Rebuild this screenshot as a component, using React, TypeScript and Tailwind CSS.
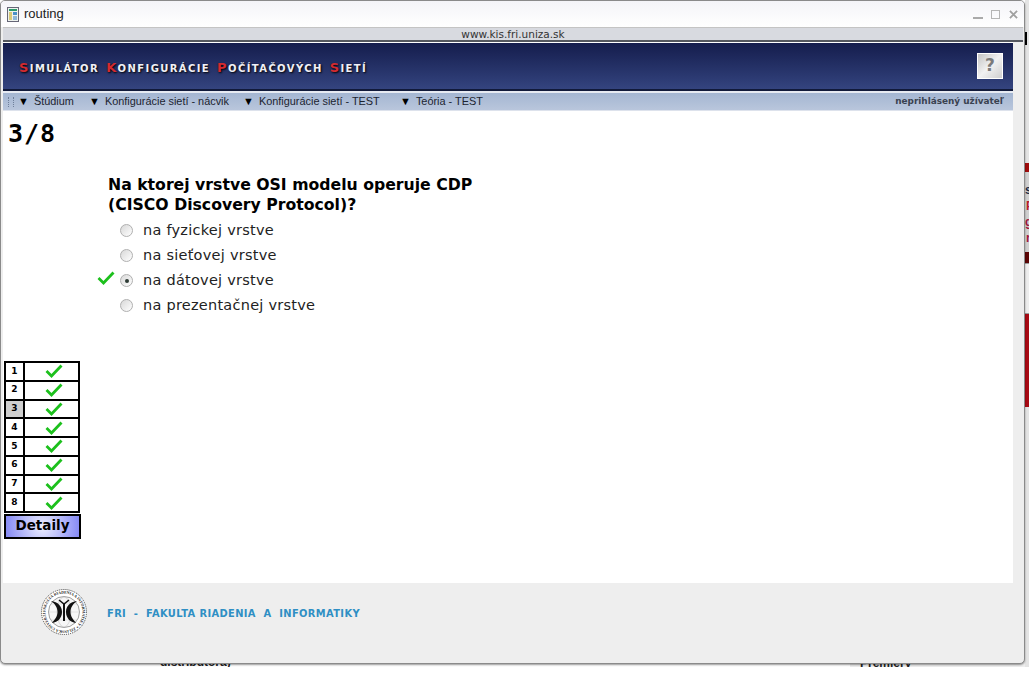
const answers = [
  { text: 'na fyzickej vrstve' },
  { text: 'na sieťovej vrstve' },
  { text: 'na dátovej vrstve', selected: true },
  { text: 'na prezentačnej vrstve' },
]

const menu = [
  { label: 'Štúdium', width: 'w-[71px]' },
  { label: 'Konfigurácie sietí - nácvik', width: 'w-[154px]' },
  { label: 'Konfigurácie sietí - TEST', width: 'w-[157px]' },
  { label: 'Teória - TEST', width: 'w-[100px]' },
]

const titleWords = ['IMULÁTOR', 'ONFIGURÁCIE', 'OČÍTAČOVÝCH', 'IETÍ']
const titleCaps = ['S', 'K', 'P', 'S']

function Check({ className }: { className: string }) {
  return (
    <svg viewBox="0 0 18 14" className={className} fill="none">
      <path d="M1.5 7 L6.5 12 L16.5 1.5" stroke="#1cc01c" strokeWidth="2.8" />
    </svg>
  )
}

function Radio({ selected }: { selected?: boolean }) {
  return (
    <span className="w-[13px] h-[13px] rounded-full border border-[#b0b0b0] bg-gradient-to-br from-[#d8d8d8] to-white flex items-center justify-center">
      {selected && <span className="w-[4px] h-[4px] rounded-full bg-[#2d3b35]" />}
    </span>
  )
}

function Logo() {
  return (
    <svg viewBox="0 0 46 46" className="w-[46px] h-[46px]">
      <circle cx="23" cy="23" r="22.5" fill="#fff" stroke="#444" strokeWidth="1" strokeDasharray="1 1" />
      <circle cx="23" cy="23" r="15.5" fill="#f6f6f6" stroke="#777" strokeWidth="0.7" />
      <ellipse cx="23" cy="23" rx="7" ry="15" fill="none" stroke="#bbb" strokeWidth="0.5" />
      <path d="M8 23 H38 M10 15 H36 M10 31 H36" stroke="#ccc" strokeWidth="0.5" />
      <defs>
        <path id="ring" d="M23 23 m-18.5 0 a18.5 18.5 0 1 1 37 0 a18.5 18.5 0 1 1 -37 0" />
      </defs>
      <text fontSize="3.9" fontFamily="'Liberation Serif', serif" fill="#222" fontWeight="700">
        <textPath href="#ring">FAKULTA RIADENIA A INFORMATIKY * ŽILINSKÁ UNIVERZITA</textPath>
      </text>
      <path d="M10 12 C17 13 21 17 21 23 C21 29 17 33 11 34 C14 30 16.5 27.5 16.5 23 C16.5 18.5 14 15 10 12 Z" fill="#111" />
      <path d="M36 12 C29 13 25 17 25 23 C25 29 29 33 35 34 C32 30 29.5 27.5 29.5 23 C29.5 18.5 32 15 36 12 Z" fill="#111" />
      <path d="M23 14 V32" stroke="#111" strokeWidth="2" />
      <path d="M18 11 L23 15 L28 11" stroke="#111" strokeWidth="1.6" fill="none" />
    </svg>
  )
}

export default function App() {
  return (
    <div className="relative w-[1032px] h-[674px] overflow-hidden bg-white font-['DejaVu_Sans',sans-serif]">
      {/* page behind the popup, the capture stops at 1029x667 */}
      <div className="absolute inset-0 w-[1029px] h-[667px] overflow-hidden">
        <div className="absolute left-[850px] top-[600px] w-[179px] h-[67px] bg-[#eeeeee]" />
        <div className="absolute left-[1025px] top-0 w-[4px] h-[667px] bg-[#e4e4e4]" />
        <div className="absolute left-[1025px] top-[32px] w-[2px] h-[13px] bg-black" />
        <div className="absolute left-[1025px] top-[163px] w-[4px] h-[244px] flex flex-col bg-[#d0d0d0]">
          <div className="h-[9px] shrink-0 bg-[#a00c0c]" />
          <div className="h-[80px] shrink-0 overflow-hidden font-['Liberation_Sans',sans-serif] font-bold text-[12px] leading-[16px]">
            <div className="mt-[10px] text-[#1c2a44]">s</div>
            <div className="text-[#b81c2c] pl-[1px]">P</div>
            <div className="text-[#a01840]">g</div>
            <div className="text-[#a01840] pl-[1px]">r</div>
          </div>
          <div className="h-[11px] shrink-0 bg-[#5c0505]" />
          <div className="h-[51px] shrink-0 bg-[#eeeeee] border-y border-[#999999]" />
          <div className="h-[93px] shrink-0 bg-[#a80a14]" />
        </div>
        <div className="absolute left-[160px] top-[653px] font-['Liberation_Sans',sans-serif] text-[12px] font-bold text-[#222]">distributora)</div>
        <div className="absolute left-[860px] top-[654px] font-['Liberation_Sans',sans-serif] text-[12px] font-bold text-[#222]">Premiéry</div>
      </div>

      {/* popup window */}
      <div className="relative w-[1025px] h-[664px] flex flex-col bg-[#eeeeee] border border-[#8a8a8a] rounded-[5px] overflow-hidden shadow-[0_1px_2px_rgba(0,0,0,0.4)] pl-[2px]">
        <div className="h-[26px] -ml-[2px] pl-[6px] pr-[6px] shrink-0 flex items-center bg-gradient-to-b from-[#f4f4f8] to-white font-['Liberation_Sans',sans-serif]">
          <svg viewBox="0 0 12 15" className="w-[12px] h-[15px]">
            <rect x="0.5" y="0.5" width="11" height="14" fill="#eef3ee" stroke="#667" />
            <rect x="2" y="2" width="8" height="2" fill="#2a9a6a" />
            <rect x="2" y="5" width="3" height="8" fill="#d9c97a" />
            <rect x="6" y="5" width="4" height="3" fill="#4a90c8" />
            <rect x="6" y="9" width="4" height="4" fill="#8fb8d8" />
          </svg>
          <span className="ml-[5px] text-[13px] text-[#222]">routing</span>
          <div className="ml-auto flex items-center gap-[8px]">
            <span className="w-[10px] h-[2px] mt-[7px] bg-[#aaaaaa]" />
            <span className="w-[9px] h-[9px] border border-[#b5b5b5]" />
            <svg viewBox="0 0 10 10" className="w-[9px] h-[9px] ml-[1px]">
              <path d="M1 1 L9 9 M9 1 L1 9" stroke="#a0a0a0" strokeWidth="2" />
            </svg>
          </div>
        </div>

        <div className="h-[13px] shrink-0 bg-[#d8dae0] mr-[1px] border-t border-[#c4c4c4] text-center text-[10.5px] leading-[12px] text-[#333]">
          www.kis.fri.uniza.sk
        </div>
        <div className="h-[2px] shrink-0 mr-[1px] bg-[#55585f]" />

        <div className="w-[1010px] flex flex-col flex-1">
          <div className="h-[47px] shrink-0 border-t border-white bg-gradient-to-b from-[#151d4d] to-[#34447f] flex items-center justify-between pl-[16px] pr-[10px]">
            <div className="flex gap-[7px] mt-[2px] text-[#f0f0f6] font-bold text-[10px] leading-none items-baseline [text-shadow:1px_1px_2px_#000] tracking-[1.4px]">
              {titleWords.map((word, i) => (
                <span key={word}>
                  <span className="text-[13px] text-[#d42a30]">{titleCaps[i]}</span>
                  {word}
                </span>
              ))}
            </div>
            <div className="w-[26px] h-[26px] border border-white bg-gradient-to-br from-[#c4c4c4] via-[#f2f2f2] to-[#cfcfcf] flex items-center justify-center font-bold text-[17px] text-[#7b7b7b]">
              ?
            </div>
          </div>

          <div className="h-[2px] shrink-0 bg-[#111a3a]" />
          <div className="h-[2px] shrink-0 bg-[#e6eaf2]" />

          <div className="h-[18px] shrink-0 flex items-center bg-gradient-to-b from-[#a4b6d2] to-[#b9c6dc] border-b border-[#dde2ec] pl-[5px] pr-[9px] font-['Liberation_Sans',sans-serif] text-[10.9px] text-[#1c2430]">
            <div className="w-[6px] h-[10px] mr-[4px] border-x border-dotted border-[#6f7f9a]" />
            {menu.map((item) => (
              <div key={item.label} className={`${item.width} flex items-center gap-[5px] shrink-0`}>
                <span className="text-[11px] leading-none text-black">▼</span>
                <span>{item.label}</span>
              </div>
            ))}
            <span className="ml-auto font-['DejaVu_Sans',sans-serif] font-bold text-[8.9px] text-[#3a4250]">neprihlásený užívateľ</span>
          </div>

          <div className="flex-1 flex flex-col bg-white pl-[2px]">
            <div className="h-[26px] mt-[10px] ml-[3px] font-['DejaVu_Sans_Mono',monospace] font-bold text-[25px] tracking-[1px] leading-[26px] text-black">3/8</div>

            <div className="ml-[103px] mt-[28px] w-[380px] font-bold text-[15.7px] leading-[20px] text-black">
              Na ktorej vrstve OSI modelu operuje CDP
              <br />
              (CISCO Discovery Protocol)?
            </div>
            <div className="mt-[3px] flex flex-col">
              {answers.map((answer) => (
                <div key={answer.text} className="h-[25px] flex items-center">
                  <div className="w-[115px] pl-[92px] shrink-0">
                    {answer.selected && <Check className="w-[18px] h-[14px] -mt-[5px]" />}
                  </div>
                  <Radio selected={answer.selected} />
                  <span className="ml-[10px] text-[14.5px] tracking-[0.25px] text-[#222]">{answer.text}</span>
                </div>
              ))}
            </div>

            <div className="mt-[43px] -ml-[1px] w-[76px]">
              <div className="border-x-2 border-t-2 border-black">
                {[1, 2, 3, 4, 5, 6, 7, 8].map((n) => (
                  <div key={n} className="h-[18.75px] flex border-b-2 border-black">
                    <div className={`w-[19px] border-r-2 border-black flex items-center justify-center font-bold text-[9px] ${n === 3 ? 'bg-[#cfcfcf]' : 'bg-white'}`}>
                      {n}
                    </div>
                    <div className="flex-1 flex items-center justify-center pl-[4px]">
                      <Check className="w-[18px] h-[14px]" />
                    </div>
                  </div>
                ))}
              </div>
              <div className="mt-[1px] h-[25px] w-[77px] pb-[3px] border-2 border-black bg-[radial-gradient(circle,#eef0ff,#8488f4)] flex items-center justify-center font-bold text-[13.5px] text-black">
                Detaily
              </div>
            </div>
          </div>

          <div className="h-[80px] shrink-0 flex items-start pl-[38px] pt-[6px]">
            <Logo />
            <span className="ml-[20px] mt-[18px] font-bold text-[9.9px] whitespace-pre tracking-[0.38px] text-[#2f8fc4]">FRI  -  FAKULTA RIADENIA  A  INFORMATIKY</span>
          </div>
        </div>
      </div>
    </div>
  )
}
